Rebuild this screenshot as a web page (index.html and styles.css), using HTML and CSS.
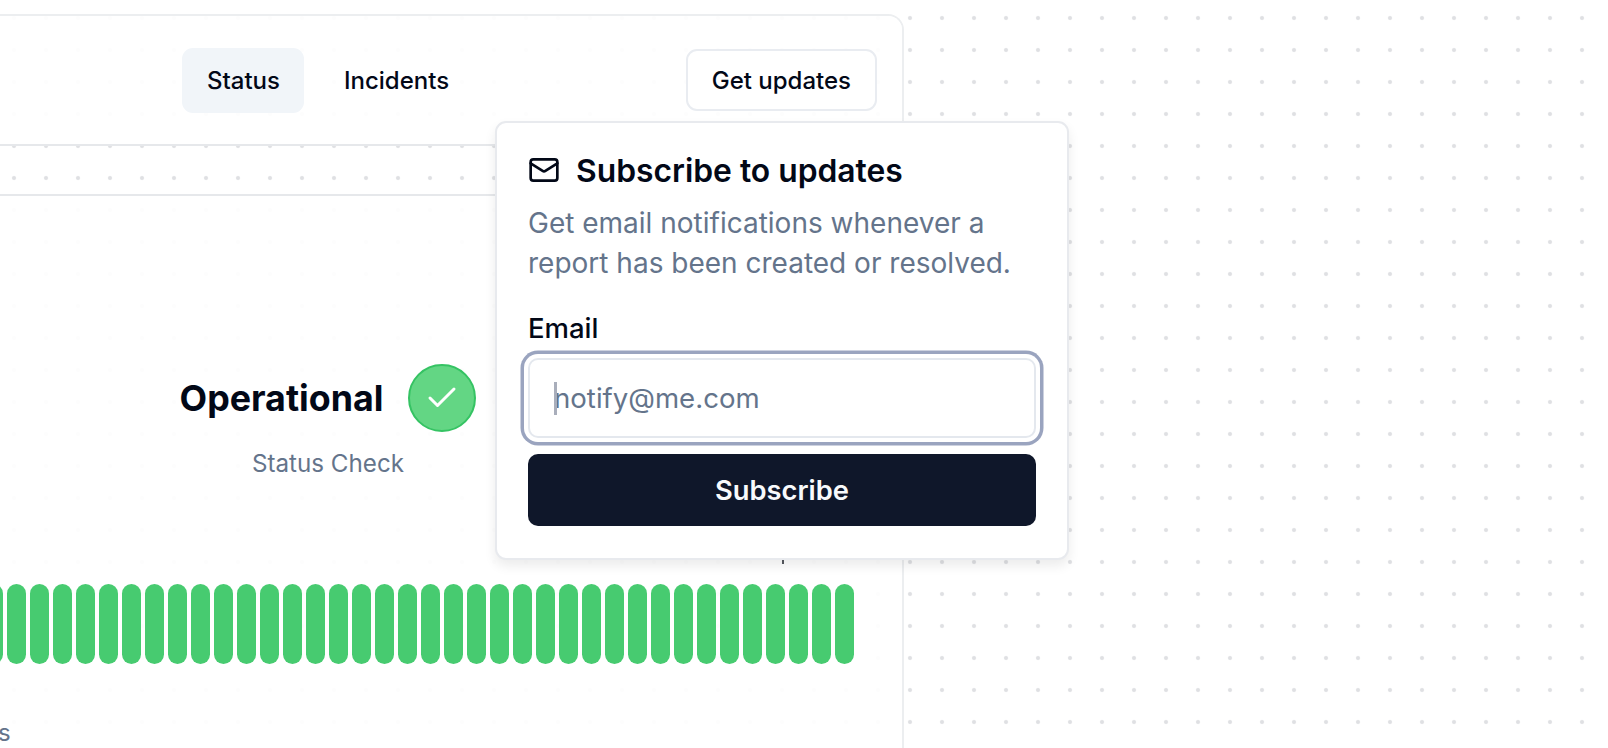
FILE: index.html
```html
<!DOCTYPE html>
<html lang="en">
<head>
  <meta charset="UTF-8" />
  <title>Status</title>
  <link rel="stylesheet" href="styles.css">
</head>
<body>
  <div class="card">
    <header class="header">
      <nav class="tabs">
        <a class="tab active">Status</a>
        <a class="tab">Incidents</a>
      </nav>
      <button class="btn-outline">Get updates</button>
    </header>

    <div class="strip"></div>

    <main class="content">
      <div class="overall">
        <h2>Operational</h2>
        <span class="status-icon">
          <svg width="36" height="36" viewBox="0 0 24 24" fill="none" stroke="#fff" stroke-width="2" stroke-linecap="round" stroke-linejoin="round"><path d="M20 6 9 17l-5-5"/></svg>
        </span>
      </div>
      <p class="check-name">Status Check</p>

      <div class="bars">
        <div></div><div></div><div></div><div></div><div></div><div></div><div></div><div></div><div></div><div></div>
        <div></div><div></div><div></div><div></div><div></div><div></div><div></div><div></div><div></div><div></div>
        <div></div><div></div><div></div><div></div><div></div><div></div><div></div><div></div><div></div><div></div>
        <div></div><div></div><div></div><div></div><div></div><div></div><div></div><div></div><div></div><div></div>
        <div></div><div></div><div></div><div></div><div></div><div></div>
      </div>
      <p class="range">90 days</p>
    </main>
  </div>

  <span class="tick"></span>

  <form class="popover">
    <div class="popover-title">
      <svg width="32" height="32" viewBox="0 0 24 24" fill="none" stroke="#020817" stroke-width="2" stroke-linecap="round" stroke-linejoin="round"><rect x="2" y="4" width="20" height="16" rx="2"/><path d="m22 7-8.97 5.7a1.94 1.94 0 0 1-2.06 0L2 7"/></svg>
      <h3>Subscribe to updates</h3>
    </div>
    <p class="popover-text">Get email notifications whenever a report has been created or resolved.</p>
    <label class="field-label" for="email">Email</label>
    <div class="field">
      <input id="email" type="text" placeholder="notify@me.com">
      <span class="caret"></span>
    </div>
    <button class="btn-primary" type="button">Subscribe</button>
  </form>
</body>
</html>
```

FILE: styles.css
```css
* {
  box-sizing: border-box;
}

html,
body {
  height: 100%;
}

body {
  margin: 0;
  height: 748px;
  overflow: hidden;
  position: relative;
  padding-top: 14px;
  color: #020817;
  font-family: Inter, 'Liberation Sans', sans-serif;
  background-color: #fff;
  background-image: radial-gradient(circle, #dfe0e3 1.4px, rgba(223, 224, 227, 0) 2.6px);
  background-size: 32px 32px;
  background-position: -2px 2px;
}

.card {
  margin-left: -245px;
  width: 1149px;
  height: 734px;
  overflow: hidden;
  border: 2px solid #eceef0;
  border-bottom: none;
  border-radius: 16px 16px 0 0;
}

.header {
  height: 128px;
  padding: 0 25px 0 425px;
  display: flex;
  align-items: center;
  justify-content: space-between;
  background-color: rgba(255, 255, 255, 0.92);
}

.tabs {
  display: flex;
  gap: 15px;
}

.tab {
  height: 65px;
  padding: 0 24px 0 25px;
  display: flex;
  align-items: center;
  font-size: 24px;
  font-weight: 500;
  border-radius: 11px;
}

.tab.active {
  background-color: #f1f5f9;
}

.btn-outline {
  height: 62px;
  padding: 0 24px;
  font: 500 24px Inter, sans-serif;
  color: #020817;
  background-color: #fff;
  border: 2px solid #e9ecf1;
  border-radius: 11px;
}

.strip {
  height: 52px;
  border-top: 2px solid #e6e8eb;
  border-bottom: 2px solid #e6e8eb;
}

.content {
  height: 620px;
  padding-top: 168px;
  background-color: rgba(255, 255, 255, 0.92);
}

.overall {
  display: flex;
  align-items: center;
  justify-content: center;
  gap: 25px;
  padding-right: 3px;
}

.overall h2 {
  margin: 0;
  font-size: 35.8px;
  font-weight: 700;
}

.status-icon {
  width: 68px;
  height: 68px;
  display: flex;
  align-items: center;
  justify-content: center;
  background-color: #63d684;
  border: 2px solid #35c363;
  border-radius: 50%;
}

.check-name {
  margin: 17px 3px 0 0;
  text-align: center;
  font-size: 24.2px;
  line-height: 30px;
  color: #64748b;
}

.bars {
  margin-top: 105px;
  padding-right: 48px;
  display: flex;
  justify-content: flex-end;
  gap: 3.5px;
}

.bars div {
  flex: none;
  width: 19.5px;
  height: 80px;
  background-color: #47cb70;
  border-radius: 10px;
}

.range {
  margin: 54px 0 0;
  padding-left: 163px;
  font-size: 24px;
  line-height: 30px;
  color: #64748b;
}

.tick {
  position: absolute;
  left: 782px;
  top: 559px;
  width: 2px;
  height: 5px;
  background-color: #55595f;
}

.popover {
  position: absolute;
  left: 495px;
  top: 121px;
  width: 574px;
  height: 439px;
  padding: 27px 31px;
  background-color: #fff;
  border: 2px solid #e8eaee;
  border-radius: 11px;
  box-shadow: 0 6px 12px rgba(0, 0, 0, 0.08);
}

.popover-title {
  display: flex;
  align-items: center;
  gap: 16px;
  height: 40px;
}

.popover-title h3 {
  margin: 0;
  font-size: 31.8px;
  font-weight: 600;
}

.popover-text {
  margin: 13px 0 0;
  font-size: 28px;
  line-height: 40px;
  color: #64748b;
}

.field-label {
  display: block;
  margin-top: 30px;
  font-size: 27.5px;
  font-weight: 500;
  line-height: 30px;
}

.field {
  position: relative;
  margin-top: 15px;
}

.field input {
  display: block;
  width: 100%;
  height: 80px;
  padding: 0 24px;
  font: 400 27.6px Inter, sans-serif;
  background-color: #fff;
  border: 2px solid #e4e8ee;
  border-radius: 10px;
  outline: none;
  box-shadow: 0 0 0 4px #fff, 0 0 0 7.5px #9aa4bf;
}

.field input::placeholder {
  color: #64748b;
  opacity: 1;
}

.caret {
  position: absolute;
  left: 26px;
  top: 24px;
  width: 3px;
  height: 33px;
  background-color: #a9aebb;
}

.btn-primary {
  display: block;
  width: 100%;
  height: 72px;
  margin-top: 16px;
  font: 600 27.3px Inter, sans-serif;
  color: #f8fafc;
  background-color: #0f172a;
  border: none;
  border-radius: 10px;
}
```
